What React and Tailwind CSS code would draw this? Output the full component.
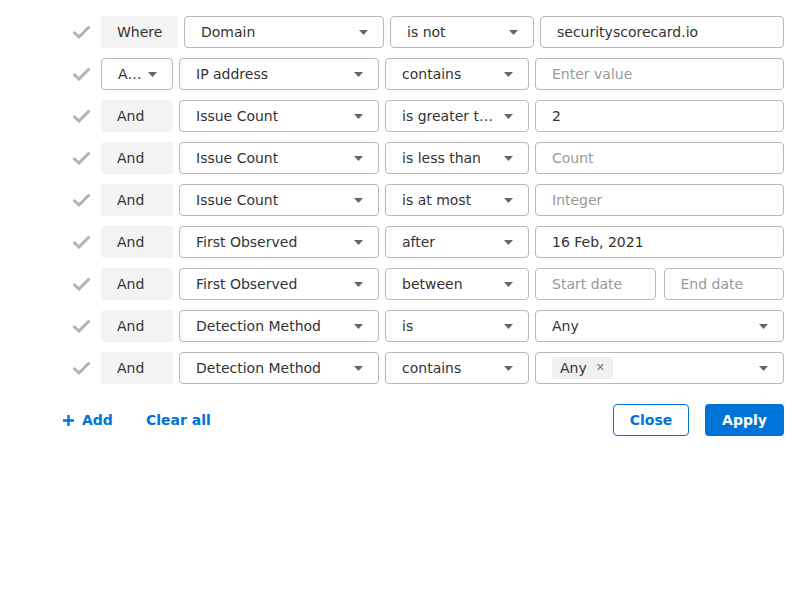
import { useState } from "react";

const Caret = () => (
  <svg width="9" height="5" viewBox="0 0 9 5" className="shrink-0">
    <path d="M0 0h9L4.5 5z" fill="#666" />
  </svg>
);

const Check = () => (
  <svg width="19" height="14" viewBox="0 0 19 14" className="shrink-0 ml-[2px]">
    <path d="M1.5 7l5.5 5L17.5 1.5" fill="none" stroke="#b3b3b3" strokeWidth="3" />
  </svg>
);

function Select({ value, w }) {
  return (
    <div
      className={`${w} h-8 shrink-0 border border-[#b8b8b8] rounded-[4px] flex items-center justify-between pl-4 pr-[15px] text-[#333]`}
    >
      <span className="truncate">{value}</span>
      <Caret />
    </div>
  );
}

function Input({ value, placeholder, className = "flex-1" }) {
  return (
    <div
      className={`${className} h-8 border border-[#b8b8b8] rounded-[4px] flex items-center px-4 min-w-0`}
    >
      {value ? (
        <span className="text-[#333]">{value}</span>
      ) : (
        <span className="text-[#999]">{placeholder}</span>
      )}
    </div>
  );
}

const rows = [
  { field: "IP address", op: "contains", placeholder: "Enter value" },
  { field: "Issue Count", op: "is greater t…", value: "2" },
  { field: "Issue Count", op: "is less than", placeholder: "Count" },
  { field: "Issue Count", op: "is at most", placeholder: "Integer" },
  { field: "First Observed", op: "after", value: "16 Feb, 2021" },
  { field: "First Observed", op: "between", kind: "range" },
  { field: "Detection Method", op: "is", kind: "select" },
  { field: "Detection Method", op: "contains", kind: "tags" },
];

export default function App() {
  const [list] = useState(rows);

  return (
    <div className="w-[800px] h-[600px] bg-white text-[14px] font-['DejaVu_Sans',sans-serif] pt-4 pl-[70px] pr-4">
      <div className="flex flex-col gap-[10px]">
        <div className="flex items-center h-8">
          <div className="w-[31px] flex"><Check /></div>
          <div className="w-[77px] h-8 shrink-0 bg-[#f3f3f3] rounded-[4px] flex items-center pl-4 text-[#333]">
            Where
          </div>
          <div className="flex gap-[6px] ml-[6px] flex-1">
            <Select value="Domain" w="w-[200px]" />
            <Select value="is not" w="w-[144px]" />
            <Input value="securityscorecard.io" />
          </div>
        </div>

        {list.map((r, i) => (
          <div key={i} className="flex items-center h-8">
            <div className="w-[31px] flex"><Check /></div>
            {i === 0 ? (
              <div className="w-[72px] h-8 shrink-0 border border-[#b8b8b8] rounded-[4px] flex items-center justify-between pl-4 pr-[15px] text-[#333]">
                <span>A…</span>
                <Caret />
              </div>
            ) : (
              <div className="w-[72px] h-8 shrink-0 bg-[#f3f3f3] rounded-[4px] flex items-center pl-4 text-[#333]">
                And
              </div>
            )}
            <div className="flex gap-[6px] ml-[6px] flex-1">
              <Select value={r.field} w="w-[200px]" />
              <Select value={r.op} w="w-[144px]" />
              {r.kind === "range" ? (
                <div className="flex-1 flex gap-2">
                  <Input placeholder="Start date" />
                  <Input placeholder="End date" />
                </div>
              ) : r.kind === "select" ? (
                <div className="flex-1 h-8 border border-[#b8b8b8] rounded-[4px] flex items-center justify-between pl-4 pr-[15px] text-[#333]">
                  <span>Any</span>
                  <Caret />
                </div>
              ) : r.kind === "tags" ? (
                <div className="flex-1 h-8 border border-[#b8b8b8] rounded-[4px] flex items-center justify-between pl-4 pr-[15px] text-[#333]">
                  <span className="h-[22px] bg-[#f0f0f0] rounded-[4px] flex items-center pl-2 pr-2 gap-[9px]">
                    Any
                    <span className="text-[11px] text-[#777]">✕</span>
                  </span>
                  <Caret />
                </div>
              ) : (
                <Input value={r.value} placeholder={r.placeholder} />
              )}
            </div>
          </div>
        ))}
      </div>

      <div className="flex items-center mt-5 h-8">
        <button className="flex items-center gap-2 text-[#0073d8] font-bold ml-[-7px]">
          <svg width="11" height="11" viewBox="0 0 11 11">
            <path d="M5.5 0v11M0 5.5h11" stroke="#0073d8" strokeWidth="2.4" />
          </svg>
          <span>Add</span>
        </button>
        <button className="text-[#0073d8] font-bold ml-[33px]">Clear all</button>
        <div className="flex-1" />
        <button className="w-[76px] h-8 border border-[#0073d8] rounded-[4px] text-[#0073d8] font-bold">
          Close
        </button>
        <button className="w-[79px] h-8 ml-4 bg-[#0073d8] rounded-[4px] text-white font-bold">
          Apply
        </button>
      </div>
    </div>
  );
}
